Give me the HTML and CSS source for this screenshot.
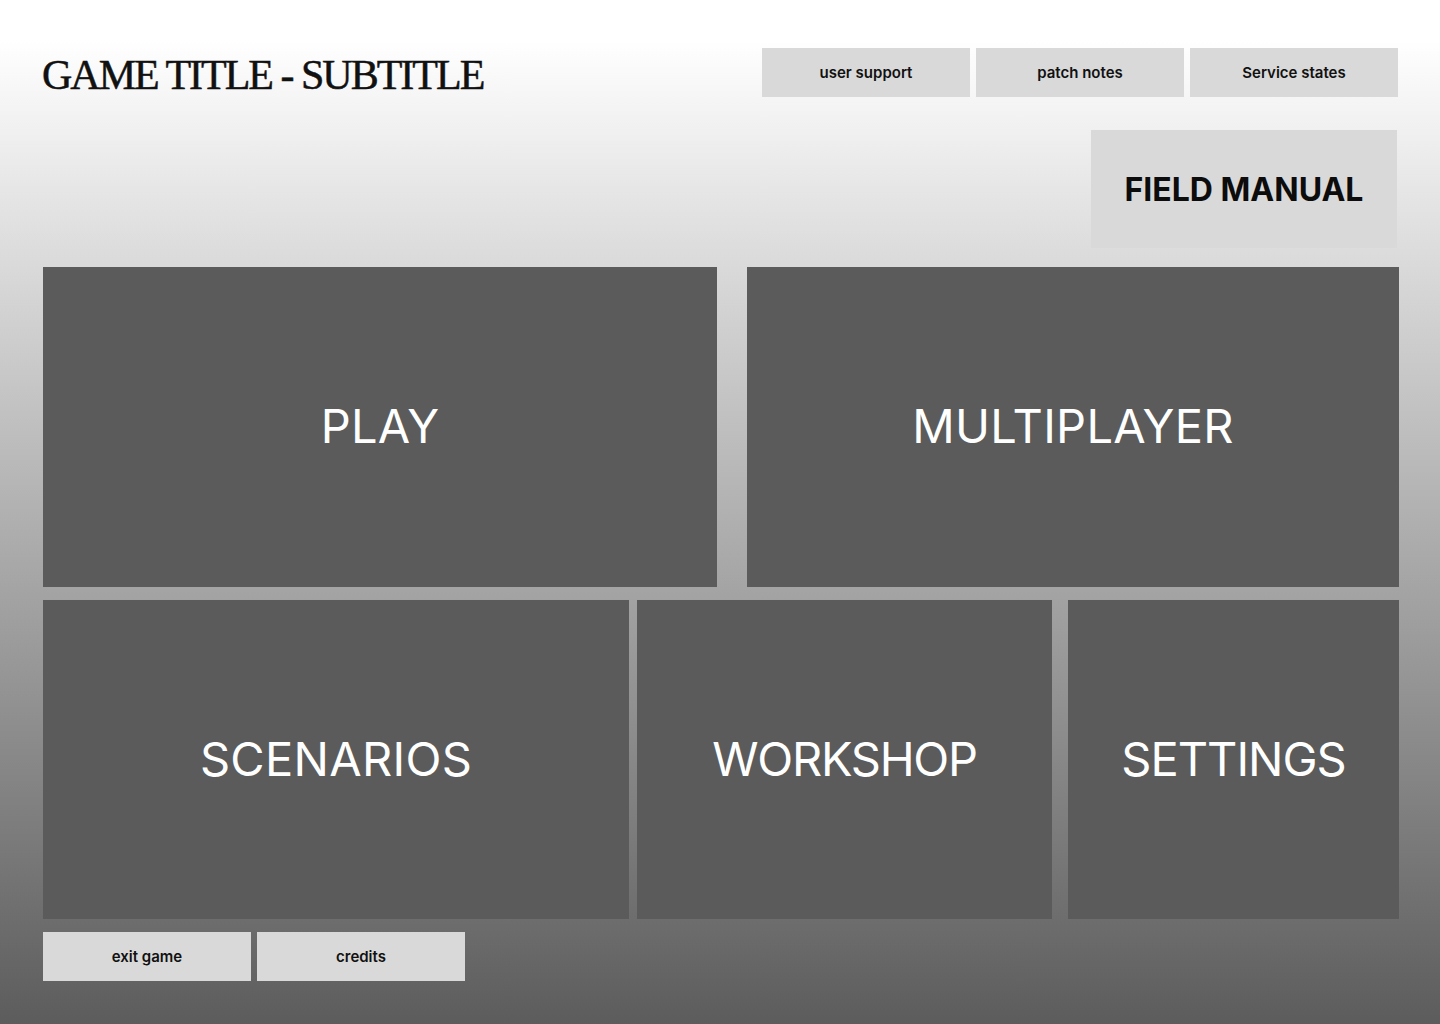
FILE: index.html
```html
<!DOCTYPE html>
<html lang="en">
<head>
    <meta charset="UTF-8">
    <meta name="viewport" content="width=device-width, initial-scale=1.0">
    <title>Game Title - Main Menu</title>
    <link rel="stylesheet" href="styles.css">
</head>
<body>
    <div class="menu">
        <div class="header">
            <h1 class="game-title">GAME TITLE - SUBTITLE</h1>
            <div class="top-links">
                <button class="small-btn">user support</button>
                <button class="small-btn">patch notes</button>
                <button class="small-btn">Service states</button>
            </div>
        </div>

        <div class="manual-row">
            <button class="manual-btn">FIELD MANUAL</button>
        </div>

        <div class="tiles tiles-top">
            <button class="tile tile-play">PLAY</button>
            <button class="tile tile-multi">MULTIPLAYER</button>
        </div>
        <div class="tiles tiles-bottom">
            <button class="tile tile-scenarios">SCENARIOS</button>
            <button class="tile tile-workshop">WORKSHOP</button>
            <button class="tile tile-settings">SETTINGS</button>
        </div>

        <div class="footer">
            <button class="small-btn">exit game</button>
            <button class="small-btn">credits</button>
        </div>
    </div>
</body>
</html>
```

FILE: styles.css
```css
html, body {
    height: 100%;
}
body {
    margin: 0;
    font-family: Inter, "Noto Sans", sans-serif;
    background: linear-gradient(180deg, #ffffff 0px, #ffffff 40px, #5c5c5c 1024px);
    background-attachment: fixed;
}
button {
    font-family: inherit;
    border: none;
    cursor: pointer;
    padding: 0;
}
.menu {
    width: 1356px;
    padding: 48px 0 0 43px;
}
.header {
    display: flex;
    justify-content: space-between;
    align-items: center;
    height: 49px;
}
.game-title {
    margin: 0;
    margin-left: -1px;
    padding-top: 5px;
    font-family: "Liberation Serif", "Times New Roman", serif;
    font-weight: 400;
    font-size: 42px;
    letter-spacing: -2px;
    color: #111;
    line-height: 49px;
    -webkit-text-stroke: 0.5px #111;
}
.top-links {
    display: flex;
    gap: 6px;
    margin-right: 1px;
}
.small-btn {
    width: 208px;
    height: 49px;
    background: #d9d9d9;
    color: #111;
    font-size: 15px;
    font-weight: 600;
}
.manual-row {
    display: flex;
    justify-content: flex-end;
    margin-top: 33px;
}
.manual-btn {
    width: 306px;
    height: 118px;
    margin-right: 2px;
    background: #d9d9d9;
    color: #0c0c0c;
    font-size: 32px;
    font-weight: 700;
}
.tiles {
    display: flex;
    height: 320px;
}
.tiles-top {
    margin-top: 19px;
    gap: 30px;
}
.tiles-bottom {
    margin-top: 13px;
    height: 319px;
}
.tile {
    background: #5b5b5b;
    color: #fff;
    font-size: 47px;
    font-weight: 400;
    letter-spacing: 0.3px;
    padding-bottom: 3px;
}
.tile-play { width: 674px; }
.tile-multi { width: 652px; }
.tile-scenarios { width: 586px; }
.tile-workshop { width: 415px; margin-left: 8px; letter-spacing: -1.3px; }
.tile-settings { width: 331px; margin-left: 16px; letter-spacing: -1px; }
.footer {
    display: flex;
    gap: 6px;
    margin-top: 13px;
}
```
